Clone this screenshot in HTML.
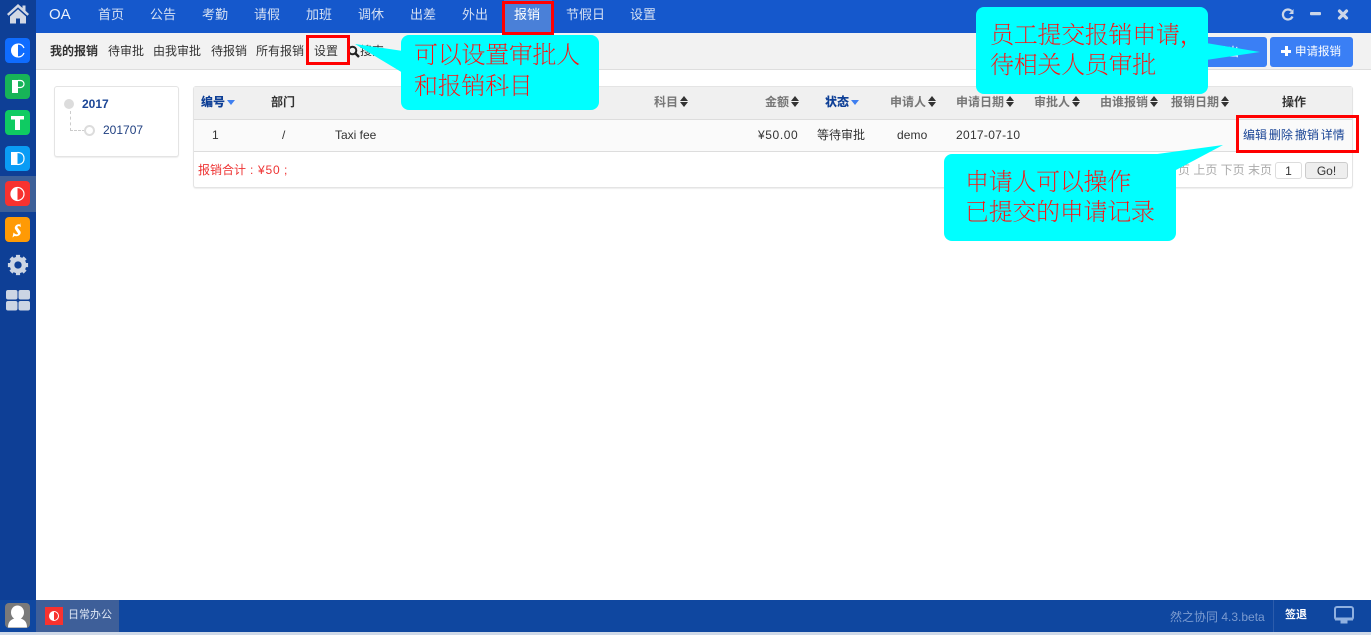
<!DOCTYPE html>
<html lang="zh"><head><meta charset="utf-8"><title>OA</title>
<style>
html,body{margin:0;padding:0;background:#fff;overflow:hidden}
body{width:1371px;height:635px;position:relative;font-family:"Liberation Sans","Noto Sans CJK SC",sans-serif;font-size:12px;color:#333}
.a{position:absolute;white-space:nowrap}
.n{position:absolute;top:0;height:33px;line-height:29px;font-size:13px;color:#d5e0f3;white-space:nowrap}
.s{position:absolute;top:33px;height:36px;line-height:36px;font-size:12px;color:#333;white-space:nowrap}
.h{position:absolute;top:87px;height:32px;line-height:31px;font-size:12px;font-weight:bold;color:#777;white-space:nowrap}
.h b{color:#0e3f96}
.d{position:absolute;top:120px;height:31px;line-height:30px;font-size:12px;color:#333;white-space:nowrap}
.u,.w{display:inline-block;vertical-align:middle;margin-left:2px}
.w{width:0;height:0;border:4px solid transparent;border-top:5px solid #3f7ff0;border-bottom:0;margin-top:-1px}
.u{width:9px;height:11px;margin-top:-2px;position:relative}
.u:before,.u:after{content:"";position:absolute;left:0;border:4.5px solid transparent}
.u:before{top:0;border-top:0;border-bottom:5px solid #333}
.u:after{bottom:0;border-bottom:0;border-top:5px solid #333}
.t{position:absolute;left:5px;width:25px;height:25px}
.c{position:absolute;background:#0ff;border-radius:8px;color:#f11;font-family:"Liberation Serif","Noto Serif CJK SC",serif;font-size:24px;font-weight:200;white-space:nowrap;letter-spacing:-.3px}
.r{position:absolute;border:3px solid #f00;box-sizing:border-box}
</style></head>
<body>
<!-- top bar -->
<div class="a" style="left:0;top:0;width:1371px;height:33px;background:#1558cc"></div>
<div class="a" style="left:504px;top:0;width:48px;height:33px;background:#4a80d8"></div>
<div class="n" style="left:49px;font-size:15px;line-height:30px;color:#eaf0fb">OA</div>
<div class="n" style="left:98px">首页</div>
<div class="n" style="left:150px">公告</div>
<div class="n" style="left:202px">考勤</div>
<div class="n" style="left:254px">请假</div>
<div class="n" style="left:306px">加班</div>
<div class="n" style="left:358px">调休</div>
<div class="n" style="left:410px">出差</div>
<div class="n" style="left:462px">外出</div>
<div class="n" style="left:514px;color:#fff">报销</div>
<div class="n" style="left:566px">节假日</div>
<div class="n" style="left:630px">设置</div>
<svg class="a" style="left:1280px;top:6px" width="70" height="18" viewBox="0 0 70 18">
<path d="M11.500 5A5 5 0 1 0 12.500 10.500" fill="none" stroke="#ccd6e8" stroke-width="2.200"/><path d="M13.500 3v5H9z" fill="#ccd6e8"/>
<rect x="30" y="6" width="11" height="3.200" rx="1" fill="#ccd6e8"/>
<path d="M59.500 5l7 7M66.500 5l-7 7" stroke="#ccd6e8" stroke-width="3.200" stroke-linecap="round"/></svg>

<!-- sub bar -->
<div class="a" style="left:36px;top:33px;width:1335px;height:36px;background:#f2f2f2;border-bottom:1px solid #dedede"></div>
<div class="s" style="left:50px;font-weight:bold">我的报销</div>
<div class="s" style="left:108px">待审批</div>
<div class="s" style="left:153px">由我审批</div>
<div class="s" style="left:211px">待报销</div>
<div class="s" style="left:256px">所有报销</div>
<div class="s" style="left:314px">设置</div>
<svg class="a" style="left:347px;top:45px" width="13" height="13" viewBox="0 0 13 13"><circle cx="5.500" cy="5.500" r="3.800" fill="none" stroke="#222" stroke-width="2"/><path d="M8.500 8.500l3.500 3.500" stroke="#222" stroke-width="2.400"/></svg>
<div class="s" style="left:360px">搜索</div>
<div class="a" style="left:1180px;top:37px;width:87px;height:30px;background:#3a7ff5;border-radius:3px;color:#fff;line-height:30px"><span style="position:absolute;left:35px">导出</span></div>
<div class="a" style="left:1270px;top:37px;width:83px;height:30px;background:#3a7ff5;border-radius:3px;color:#fff;line-height:30px"><span style="position:absolute;left:11px;top:9px;width:10px;height:10px;background:linear-gradient(#fff,#fff) 50% 50%/10px 3px no-repeat,linear-gradient(#fff,#fff) 50% 50%/3px 10px no-repeat"></span><span style="position:absolute;left:25px;font-size:11.500px">申请报销</span></div>

<!-- sidebar -->
<div class="a" style="left:0;top:0;width:36px;height:600px;background:#0e3f96"></div>
<div class="a" style="left:0;top:176px;width:36px;height:36px;background:#3d6099"></div>
<svg class="a" style="left:6px;top:3px" width="24" height="21" viewBox="0 0 24 21"><path d="M12 1L1 11l1.600 1.800L12 4.400l9.400 8.400L23 11l-3.500-3.200V2.500h-3V5z" fill="#d3d8e4"/><path d="M4 13.500L12 6.300l8 7.200V20.500h-6v-5h-4v5H4z" fill="#d3d8e4"/></svg>
<svg class="t" style="top:38px" viewBox="0 0 25 25"><rect width="25" height="25" rx="4" fill="#0f6cff"/><path d="M13 5.500a7 7 0 1 0 0 14z" fill="#fff"/><path d="M13 6a6.500 6.500 0 0 1 6 4M13 19a6.500 6.500 0 0 0 6-4" fill="none" stroke="#fff" stroke-width="1.200"/></svg>
<svg class="t" style="top:74px" viewBox="0 0 25 25"><rect width="25" height="25" rx="4" fill="#17b458"/><rect x="7" y="6" width="6" height="13" fill="#fff"/><path d="M13 6.500h2.500a3.500 3.500 0 0 1 0 7H13" fill="none" stroke="#fff" stroke-width="1.200"/></svg>
<svg class="t" style="top:110px" viewBox="0 0 25 25"><rect width="25" height="25" rx="4" fill="#0fcb62"/><path d="M6 6h13v3.500h-4V20h-5V9.500H6z" fill="#fff"/></svg>
<svg class="t" style="top:146px" viewBox="0 0 25 25"><rect width="25" height="25" rx="4" fill="#0a9cf5"/><rect x="6" y="6" width="6.500" height="13" fill="#fff"/><path d="M12.500 6.500c4.500 0 6.500 2.500 6.500 6s-2 6-6.500 6" fill="none" stroke="#fff" stroke-width="1.200"/></svg>
<svg class="t" style="top:181px" viewBox="0 0 25 25"><rect width="25" height="25" rx="4" fill="#f8322f"/><circle cx="12.500" cy="13" r="6.500" fill="none" stroke="#fff" stroke-width="1.200"/><path d="M12.500 6.500a6.500 6.500 0 0 0 0 13z" fill="#fff"/></svg>
<svg class="t" style="top:217px" viewBox="0 0 25 25"><rect width="25" height="25" rx="4" fill="#ff9a05"/><path d="M15 5.500l1 4.500c-2-1.500-4-1-3.500.5l3 4c1 2.500-1.500 5.500-6 4.500l-2 1.500 1-5c1.500 2 4.500 2.500 4.500 1l-3-4.500c-1-2.500 2-5.500 5-4.500z" fill="#fff"/></svg>
<svg class="a" style="left:7px;top:254px" width="22" height="22" viewBox="0 0 24 24"><circle cx="12" cy="12" r="6.500" fill="none" stroke="#ccd5e4" stroke-width="5"/><path d="M12 1v22M1 12h22M4.200 4.200l15.600 15.600M19.800 4.200L4.200 19.800" stroke="#ccd5e4" stroke-width="4.500" stroke-dasharray="4.500 13 4.500"/></svg>
<svg class="a" style="left:6px;top:290px" width="24" height="21"><rect width="11.500" height="9.500" rx="2" fill="#ccd5e4"/><rect x="12.500" width="11.500" height="9.500" rx="2" fill="#ccd5e4"/><rect y="11" width="11.500" height="9.500" rx="2" fill="#ccd5e4"/><rect x="12.500" y="11" width="11.500" height="9.500" rx="2" fill="#ccd5e4"/></svg>

<!-- tree -->
<div class="a" style="left:54px;top:86px;width:123px;height:69px;background:#fff;border:1px solid #e4e4e4;border-radius:3px;box-shadow:0 1px 1px #eee"></div>
<div class="a" style="left:64px;top:99px;width:10px;height:10px;border-radius:50%;background:#dcdcdc"></div>
<div class="a" style="left:70px;top:111px;width:14px;height:19px;border-left:1px dashed #ccc;border-bottom:1px dashed #ccc"></div>
<div class="a" style="left:84px;top:125px;width:7px;height:7px;border-radius:50%;border:2px solid #dcdcdc;background:#fff"></div>
<div class="a" style="left:82px;top:96px;line-height:16px;font-weight:bold;color:#1a4596">2017</div>
<div class="a" style="left:103px;top:122px;line-height:16px;color:#1f3f80">201707</div>

<!-- table -->
<div class="a" style="left:193px;top:86px;width:1158px;height:100px;background:#fff;border:1px solid #e4e4e4;border-radius:3px;box-shadow:0 1px 1px #eee"></div>
<div class="a" style="left:194px;top:87px;width:1158px;height:32px;background:#f0f0f0;border-bottom:1px solid #ddd"></div>
<div class="a" style="left:194px;top:120px;width:1158px;height:31px;background:#fafafa;border-bottom:1px solid #ddd"></div>
<div class="h" style="left:201px"><b>编号</b><i class="w"></i></div>
<div class="h" style="left:271px;color:#333">部门</div>
<div class="h" style="left:654px">科目<i class="u"></i></div>
<div class="h" style="left:765px">金额<i class="u"></i></div>
<div class="h" style="left:825px"><b>状态</b><i class="w"></i></div>
<div class="h" style="left:890px">申请人<i class="u"></i></div>
<div class="h" style="left:956px">申请日期<i class="u"></i></div>
<div class="h" style="left:1034px">审批人<i class="u"></i></div>
<div class="h" style="left:1100px">由谁报销<i class="u"></i></div>
<div class="h" style="left:1171px">报销日期<i class="u"></i></div>
<div class="h" style="left:1282px;color:#333">操作</div>
<div class="d" style="left:212px">1</div>
<div class="d" style="left:282px">/</div>
<div class="d" style="left:335px">Taxi fee</div>
<div class="d" style="left:758px;letter-spacing:.6px">¥50.00</div>
<div class="d" style="left:817px">等待审批</div>
<div class="d" style="left:897px;letter-spacing:.1px">demo</div>
<div class="d" style="left:956px;letter-spacing:.3px">2017-07-10</div>
<div class="d" style="left:1243px;color:#1a4596;word-spacing:-1.400px">编辑 删除 撤销 详情</div>
<div class="a" style="left:198px;top:162px;line-height:16px;color:#e33">报销合计<span style="margin:0 4px 0 4px">:</span> <span style="position:absolute;left:60px;letter-spacing:.8px">¥50</span><span style="position:absolute;left:86px">;</span></div>
<div class="a" style="left:1166px;top:162px;line-height:16px;color:#aaa">首页 上页 下页 末页</div>
<div class="a" style="left:1275px;top:162px;width:25px;height:15px;border:1px solid #ddd;border-radius:3px;background:#fff;text-align:center;line-height:16px">1</div>
<div class="a" style="left:1305px;top:162px;width:41px;height:15px;border:1px solid #ccc;border-radius:3px;background:#eee;text-align:center;line-height:16px">Go!</div>

<!-- bottom bar -->
<div class="a" style="left:0;top:600px;width:1371px;height:32px;background:#0f47a0"></div>
<div class="a" style="left:0;top:632px;width:1371px;height:3px;background:#cfd9e8"></div>
<div class="a" style="left:36px;top:600px;width:83px;height:32px;background:#3e5f99"></div>
<svg class="a" style="left:5px;top:603px" width="25" height="25"><rect width="25" height="25" rx="4" fill="#7a7a7a"/><ellipse cx="12.500" cy="9.500" rx="6.500" ry="7" fill="#fff"/><path d="M3 24.500c0-6 3-8 6.500-9h6c3.500 1 6.500 3 6.500 9z" fill="#fff"/></svg>
<svg class="a" style="left:45px;top:607px" width="18" height="18"><rect width="18" height="18" fill="#f8322f"/><circle cx="9" cy="9" r="4.500" fill="none" stroke="#fff"/><path d="M9 4.500a4.500 4.500 0 0 0 0 9z" fill="#fff"/></svg>
<div class="a" style="left:68px;top:600px;line-height:31px;font-size:11px;color:#dde6f5">日常办公</div>
<div class="a" style="left:1170px;top:601px;line-height:32px;color:#7b9bd0">然之协同 4.3.beta</div>
<div class="a" style="left:1273px;top:600px;width:1px;height:32px;background:#2c5cab"></div>
<div class="a" style="left:1285px;top:600px;line-height:31px;font-size:11px;font-weight:bold;color:#fff">签退</div>
<svg class="a" style="left:1334px;top:606px" width="21" height="19"><rect x="1" y="1" width="18" height="12.500" rx="2" fill="none" stroke="#8fb0e0" stroke-width="2"/><rect x="1" y="11.500" width="18" height="3" fill="#8fb0e0"/><rect x="6.500" y="14" width="7" height="3.500" fill="#8fb0e0"/></svg>

<!-- annotations -->
<div class="r" style="left:502px;top:1px;width:52px;height:34px"></div>
<div class="r" style="left:306px;top:35px;width:44px;height:30px"></div>
<div class="r" style="left:1236px;top:115px;width:123px;height:38px"></div>
<svg class="a" style="left:0;top:0" width="1371" height="635"><polygon points="355,44 403,51 403,73" fill="#0ff"/><polygon points="1206,43 1260,52 1206,60" fill="#0ff"/><polygon points="1223,145 1150,155 1176,170" fill="#0ff"/></svg>
<div class="c" style="left:401px;top:35px;width:185px;height:75px;padding-left:13px;line-height:31px"><div style="padding-top:6px">可以设置审批人<br>和报销科目</div></div>
<div class="c" style="left:976px;top:7px;width:218px;height:87px;padding-left:14px;line-height:30px"><div style="padding-top:14px">员工提交报销申请，<br>待相关人员审批</div></div>
<div class="c" style="left:944px;top:154px;width:211px;height:87px;padding-left:21px;line-height:30px"><div style="padding-top:14px">申请人可以操作<br>已提交的申请记录</div></div>
</body></html>
